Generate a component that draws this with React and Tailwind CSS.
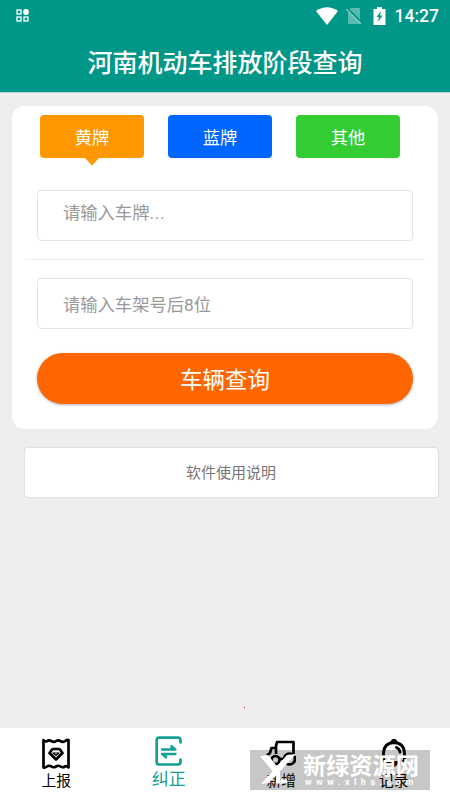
const SANS = "font-['Roboto','Noto_Sans_CJK_SC',sans-serif]";

function StatusBar() {
  return (
    <div className="flex h-8 items-center justify-between pl-4 pr-[11px] text-white">
      <svg width="14" height="14" viewBox="0 0 14 14" fill="none" stroke="currentColor" strokeWidth="1.3">
        <rect x="1" y="1" width="4" height="4" />
        <circle cx="10" cy="3" r="2.9" fill="currentColor" stroke="none" />
        <rect x="1" y="8" width="4" height="4" />
        <rect x="8" y="8" width="4" height="4" />
      </svg>
      <div className="flex items-center">
        <svg width="22" height="18" viewBox="0 0 22 18" fill="currentColor">
          <path d="M0 4Q11-3.500 22 4L11 18Z" />
        </svg>
        <svg className="ml-2" width="17" height="18" viewBox="0 0 17 18">
          <path d="M5 1H14V17H2V4Z" fill="#fff" opacity=".35" />
          <path d="M1 1L16 16" stroke="#009688" strokeWidth="2" />
          <path d="M0 2L15 17" stroke="#8bcfc7" strokeWidth="1.2" />
        </svg>
        <svg className="ml-2.5" width="14" height="18" viewBox="0 0 14 18">
          <path d="M4 0H9V2H12.500V18H.5V2H4Z" fill="#fff" />
          <path d="M8 4L3.500 10H6L5 15L9.500 8.500H7Z" fill="#009688" />
        </svg>
        <span className="ml-[8px] text-[17.500px] font-medium leading-8">14:27</span>
      </div>
    </div>
  );
}

function PlateTab({ label, color, active }) {
  return (
    <button className={`relative flex h-[43px] w-[104px] items-center justify-center rounded-[4px] pt-[5px] text-[17.300px] text-white ${color}`}>
      {label}
      {active && (
        <svg className="absolute left-[44px] top-[42px]" width="16" height="9" viewBox="0 0 16 9">
          <path d="M0 0H16L8 8.500Z" fill="#ff9800" />
        </svg>
      )}
    </button>
  );
}

function ReceiptIcon() {
  return (
    <svg width="30" height="32" viewBox="0 0 30 32" fill="none" stroke="currentColor" strokeWidth="2.700" strokeLinejoin="round">
      <path d="M2.500 2Q4 4 6 3.200Q8 1.500 10.500 3.200Q12.500 4.700 15 3.200Q17.500 1.500 19.500 3.200Q21.500 4.700 24 3.200Q26 1.800 27.500 2V29.500Q26 27.500 24 28.500Q21.500 30 19.500 28.500Q17.500 27 15 28.500Q12.500 30 10.500 28.500Q8 27 6 28.500Q4 30 2.500 29.500Z" />
      <path d="M11.500 11H18.500L21.500 15L15 21.500L8.500 15Z" />
      <path d="M12 15H18L15 17.500Z" strokeWidth="1.200" />
    </svg>
  );
}

function ExchangeIcon() {
  return (
    <svg width="28" height="31" viewBox="0 0 28 31" fill="none" stroke="currentColor" strokeWidth="2.700" strokeLinecap="round" strokeLinejoin="round">
      <path d="M25.500 6.500V4Q25.500 1.700 23 1.700H4Q1.700 1.700 1.700 4V26Q1.700 28.500 4 28.500H23Q25.500 28.500 25.500 26V23.500" />
      <path d="M7 13.500H20.500L16.500 10V13M20.500 18H7L11 21.500V18.500" strokeWidth="2.300" />
    </svg>
  );
}

function TruckIcon() {
  return (
    <svg width="30" height="30" viewBox="0 0 30 30" fill="none" stroke="currentColor" strokeWidth="2.700" strokeLinejoin="round">
      <path d="M10 15V7L11 3H27.500V17M10 9H5.500L4 14L1.500 16V20L4 24H6" />
      <circle cx="23.500" cy="20" r="5.500" />
      <circle cx="9.500" cy="21" r="4" />
      <path d="M13 20H18" />
    </svg>
  );
}

function BellIcon() {
  return (
    <svg width="26" height="31" viewBox="0 0 26 31" fill="none" stroke="currentColor" strokeWidth="2.800" strokeLinecap="round" strokeLinejoin="round">
      <path d="M2.500 21V14Q3 4 13 3.500Q23 4 23.500 14V21L21 23.500H5Z" />
      <path d="M11 2.500Q13 0 15 2.500M15.500 8.500Q18.500 10 19 13" />
      <path d="M9 24H17Q13 31 9 24Z" fill="currentColor" strokeWidth="1" />
    </svg>
  );
}

function NavItem({ icon, label, active }) {
  return (
    <div className={active ? "flex flex-1 flex-col items-center pt-[7px] text-[#159f93]" : "flex flex-1 flex-col items-center pt-[10px] text-black"}>
      <div className="flex h-[32px] items-center">{icon}</div>
      <span className={active ? "text-[17px] leading-[24px]" : "text-[14.700px] leading-[22px]"}>{label}</span>
    </div>
  );
}

function Watermark() {
  return (
    <div className="absolute left-[250px] top-[750px] flex h-10 w-[180px] items-center bg-black/[.22] text-white">
      <svg className="ml-[10px] shrink-0" width="36" height="32" viewBox="0 0 36 32" fill="none" stroke="currentColor">
        <path d="M0 2L8 1L19 15L14 19ZM27 1L36 0L9 29L1 30Z" fill="currentColor" stroke="none" />
        <path d="M18 15V27.500H27" strokeWidth="4" />
      </svg>
      <div className="ml-[7px] flex flex-col">
        <span className="whitespace-nowrap text-[23.200px] font-bold leading-[24px]">新绿资源网</span>
        <span className="ml-[2px] whitespace-nowrap text-[9px] font-bold leading-[9px] tracking-[4.500px]">www.xlhs.com</span>
      </div>
    </div>
  );
}

export default function App() {
  return (
    <div className={`relative flex h-[800px] w-[450px] flex-col overflow-hidden bg-[#efedee] ${SANS}`}>
      <header className="h-[93px] shrink-0 border-b border-[#b2dbd7] bg-[#009688]">
        <StatusBar />
        <h1 className="pt-[2px] text-center text-[25px] font-medium leading-[60px] text-white">河南机动车排放阶段查询</h1>
      </header>

      <main className="flex flex-1 flex-col">
        <section className="ml-3 mr-3 mt-[13px] h-[323px] rounded-[13px] bg-white px-[13px] pt-[9px]">
          <div className="flex gap-6 pl-[15px]">
            <PlateTab label="黄牌" color="bg-[#ff9800]" active />
            <PlateTab label="蓝牌" color="bg-[#0066ff]" />
            <PlateTab label="其他" color="bg-[#33cc33]" />
          </div>
          <div className="mx-3 mt-[32px] flex h-[51px] items-center rounded-[4px] border border-[#e2e2e2] px-[25px] pb-[3px] text-[17.300px] text-[#999]">请输入车牌<span className="tracking-[0.700px]">...</span></div>
          <div className="mt-[18px] h-px bg-[#eee]" />
          <div className="mx-3 mt-[18px] flex h-[51px] items-center rounded-[4px] border border-[#e2e2e2] px-[25px] pt-[4px] text-[17.300px] text-[#999]">请输入车架号后8位</div>
          <button className="mx-3 mt-[24px] flex h-[51px] w-[376px] items-center justify-center rounded-full bg-[#ff6600] pt-[4px] text-[22.500px] text-white shadow-[0_1px_3px_rgba(0,0,0,0.3)]">车辆查询</button>
        </section>
        <button className="ml-[25px] mr-3 mt-[19px] flex h-[49px] items-center justify-center rounded-[3px] bg-white pt-[2px] pr-[1px] text-[15px] text-[#777] shadow-[0_0_2px_rgba(0,0,0,0.2)]">软件使用说明</button>
        <div className="ml-[244px] mt-[210px] h-px w-px bg-[#c00030]" />
      </main>

      <nav className="flex h-[72px] shrink-0 bg-white">
        <NavItem icon={<ReceiptIcon />} label="上报" />
        <NavItem icon={<ExchangeIcon />} label="纠正" active />
        <NavItem icon={<TruckIcon />} label="新增" />
        <NavItem icon={<BellIcon />} label="记录" />
      </nav>
      <Watermark />
    </div>
  );
}
